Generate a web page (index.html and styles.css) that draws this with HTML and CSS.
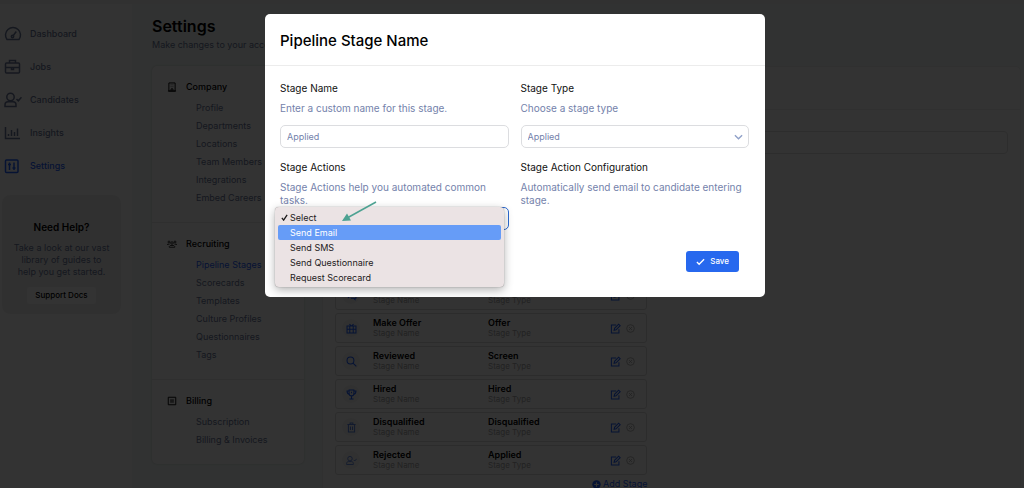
FILE: index.html
```html
<!DOCTYPE html>
<html lang="en">
<head>
  <meta charset="UTF-8" />
  <meta name="viewport" content="width=device-width, initial-scale=1.0"/>
  <title>Settings - Pipeline Stages</title>
  <link rel="stylesheet" href="styles.css">
</head>
<body>
  <svg class="sprite" aria-hidden="true">
    <symbol id="i-edit" viewBox="0 0 16 16">
      <path d="M9 3H2v11.5h11V9"/>
      <path d="M6 10.5l.6-2.8L12.6 1.7l2.2 2.2-6 6z"/>
    </symbol>
    <symbol id="i-remove" viewBox="0 0 16 16">
      <circle cx="8" cy="8" r="6.8"/>
      <path d="M5.5 5.5l5 5M10.5 5.5l-5 5"/>
    </symbol>
    <symbol id="i-user" viewBox="0 0 18 16">
      <circle cx="6.5" cy="5" r="3.7"/>
      <path d="M4 9.8h5c1.8 0 3 1.2 3 3v1.7H1v-1.7c0-1.8 1.2-3 3-3zM12.5 7l1.8 1.8L17.5 5.2"/>
    </symbol>
  </svg>

  <div class="app">
    <aside class="sidebar">
      <nav class="main-nav">
        <a href="#"><svg viewBox="0 0 18 16"><path d="M3 13.5a7.5 7.5 0 1 1 12 0z"/><circle cx="8.5" cy="10.5" r="1.2"/><path d="M9.3 9.5l3-4"/></svg>Dashboard</a>
        <a href="#"><svg viewBox="0 0 18 16"><rect x="1.5" y="4" width="14" height="10" rx="1"/><path d="M5.5 4V1.5h6V4M1.5 8.5h14M7.5 8.5v2h2v-2"/></svg>Jobs</a>
        <a href="#"><svg><use href="#i-user"/></svg>Candidates</a>
        <a href="#"><svg viewBox="0 0 18 16"><path d="M1.5 2v11.5H16M4.5 11V9M7.5 11V5M10.5 11V7M13.5 11V3.5"/></svg>Insights</a>
        <a href="#" class="active"><svg viewBox="0 0 18 16"><rect x="1.5" y="2" width="12.5" height="12.5" rx="1"/><path d="M5.5 4.5v7.5M10 4.5v7.5M4 6.5h3M8.5 10h3"/></svg>Settings</a>
      </nav>
      <div class="help">
        <h2>Need Help?</h2>
        <p>Take a look at our vast library of guides to help you get started.</p>
        <button type="button">Support Docs</button>
      </div>
    </aside>

    <main>
      <h1>Settings</h1>
      <p class="subtitle">Make changes to your account</p>

      <div class="columns">
        <nav class="settings-nav">
          <section>
            <h3><svg viewBox="0 0 16 16"><path d="M3 1.5h10v13H3zM1.5 14.5h13M6 4.5h1M9 4.5h1M6 7.5h1M9 7.5h1M6.5 14v-3h3v3"/></svg>Company</h3>
            <a href="#">Profile</a>
            <a href="#">Departments</a>
            <a href="#">Locations</a>
            <a href="#">Team Members</a>
            <a href="#">Integrations</a>
            <a href="#">Embed Careers</a>
          </section>
          <section>
            <h3><svg viewBox="0 0 20 16"><circle cx="4" cy="4" r="2"/><circle cx="16" cy="4" r="2"/><circle cx="10" cy="6" r="2.5"/><path d="M1 10V8.5h4M19 10V8.5h-4M4.5 14.5v-1.5l2-2h7l2 2v1.5z"/></svg>Recruiting</h3>
            <a href="#" class="active">Pipeline Stages</a>
            <a href="#">Scorecards</a>
            <a href="#">Templates</a>
            <a href="#">Culture Profiles</a>
            <a href="#">Questionnaires</a>
            <a href="#">Tags</a>
          </section>
          <section>
            <h3><svg viewBox="0 0 16 16"><path d="M2 2h12v12H2zM5 6.5h6M5 9.5h6"/></svg>Billing</h3>
            <a href="#">Subscription</a>
            <a href="#">Billing &amp; Invoices</a>
          </section>
        </nav>

        <div class="panel">
          <div class="panel-head"></div>
          <div class="panel-body">
            <input type="text" class="pipeline-name" aria-label="Pipeline name">
            <div class="stages-grid">
              <div>
                <ul class="stages">
                  <li>
                    <span class="badge"><svg viewBox="0 0 16 16"><path d="M1.5 2h9v7h-5l-2 2V9h-2zM12 6h2.5v6h-1.5v2l-2-2H7"/></svg></span>
                    <div><b>Interview</b><small>Stage Name</small></div>
                    <div><b>Interview</b><small>Stage Type</small></div>
                    <button type="button" class="edit" aria-label="Edit"><svg><use href="#i-edit"/></svg></button>
                    <button type="button" class="remove" aria-label="Remove"><svg><use href="#i-remove"/></svg></button>
                  </li>
                  <li>
                    <span class="badge"><svg viewBox="0 0 16 16"><path d="M1.5 4.5h13v10h-13zM1.5 9h13M5.5 4.5v10M10.5 4.5v10M8 4.500L5 1.500M8 4.500l3-3"/></svg></span>
                    <div><b>Make Offer</b><small>Stage Name</small></div>
                    <div><b>Offer</b><small>Stage Type</small></div>
                    <button type="button" class="edit" aria-label="Edit"><svg><use href="#i-edit"/></svg></button>
                    <button type="button" class="remove" aria-label="Remove"><svg><use href="#i-remove"/></svg></button>
                  </li>
                  <li>
                    <span class="badge"><svg viewBox="0 0 16 16"><circle cx="6.5" cy="6.5" r="5"/><path d="M10.2 10.2l4.800 4.800"/></svg></span>
                    <div><b>Reviewed</b><small>Stage Name</small></div>
                    <div><b>Screen</b><small>Stage Type</small></div>
                    <button type="button" class="edit" aria-label="Edit"><svg><use href="#i-edit"/></svg></button>
                    <button type="button" class="remove" aria-label="Remove"><svg><use href="#i-remove"/></svg></button>
                  </li>
                  <li>
                    <span class="badge"><svg viewBox="0 0 16 16"><path d="M4.5 1.5h7V6c0 2.5-1.5 4-3.5 4S4.5 8.5 4.5 6zM4.5 3h-3c0 3 1 4.5 3.5 5M11.5 3h3c0 3-1 4.5-3.5 5M8 10v4M5 14.5h6M8 4v2"/></svg></span>
                    <div><b>Hired</b><small>Stage Name</small></div>
                    <div><b>Hired</b><small>Stage Type</small></div>
                    <button type="button" class="edit" aria-label="Edit"><svg><use href="#i-edit"/></svg></button>
                    <button type="button" class="remove" aria-label="Remove"><svg><use href="#i-remove"/></svg></button>
                  </li>
                  <li>
                    <span class="badge light"><svg viewBox="0 0 16 16"><path d="M2 3.5h12M6 3.5v-2h4v2M3.5 3.5v11h9v-11M6.5 6.5v5M9.5 6.5v5"/></svg></span>
                    <div><b>Disqualified</b><small>Stage Name</small></div>
                    <div><b>Disqualified</b><small>Stage Type</small></div>
                    <button type="button" class="edit" aria-label="Edit"><svg><use href="#i-edit"/></svg></button>
                    <button type="button" class="remove" aria-label="Remove"><svg><use href="#i-remove"/></svg></button>
                  </li>
                  <li>
                    <span class="badge light"><svg><use href="#i-user"/></svg></span>
                    <div><b>Rejected</b><small>Stage Name</small></div>
                    <div><b>Applied</b><small>Stage Type</small></div>
                    <button type="button" class="edit" aria-label="Edit"><svg><use href="#i-edit"/></svg></button>
                    <button type="button" class="remove" aria-label="Remove"><svg><use href="#i-remove"/></svg></button>
                  </li>
                </ul>
                <a href="#" class="add-stage"><svg viewBox="0 0 16 16"><circle class="disc" cx="8" cy="8" r="7.5"/><path class="plus" d="M8 4v8M4 8h8"/></svg>Add Stage</a>
              </div>
            </div>
          </div>
        </div>
      </div>
    </main>
  </div>

  <div class="backdrop">
    <form class="modal" role="dialog" aria-labelledby="modal-title">
      <h2 id="modal-title">Pipeline Stage Name</h2>
      <div class="modal-body">
        <div class="fields">
          <div class="field">
            <label for="stage-name">Stage Name</label>
            <p>Enter a custom name for this stage.</p>
            <input type="text" id="stage-name" value="Applied">
          </div>
          <div class="field">
            <label for="stage-type">Stage Type</label>
            <p>Choose a stage type</p>
            <div class="select">
              <select id="stage-type"><option>Applied</option></select>
              <svg class="chevron" viewBox="0 0 10 6"><path d="M1 1l4 4 4-4"/></svg>
            </div>
          </div>
          <div class="field">
            <label for="stage-action">Stage Actions</label>
            <p>Stage Actions help you automated common tasks.</p>
            <div class="select open">
              <select id="stage-action"><option></option></select>
              <ul class="menu" role="listbox" aria-label="Stage Actions">
                <li role="option" aria-selected="true"><svg class="tick" viewBox="0 0 8 8"><path d="M1 4.5l2 2.5L7 1"/></svg>Select</li>
                <li role="option" class="hover">Send Email</li>
                <li role="option">Send SMS</li>
                <li role="option">Send Questionnaire</li>
                <li role="option">Request Scorecard</li>
              </ul>
              <svg class="arrow" viewBox="0 0 36 22"><path class="shaft" d="M35 1L7 16.5"/><path class="head" d="M1 20l5-7.500 4 7z"/></svg>
            </div>
          </div>
          <div class="field">
            <h4>Stage Action Configuration</h4>
            <p>Automatically send email to candidate entering stage.</p>
          </div>
        </div>
        <div class="actions">
          <button type="submit"><svg viewBox="0 0 10 8"><path d="M1 4l2.5 2.5L9 1"/></svg>Save</button>
        </div>
      </div>
    </form>
  </div>
</body>
</html>
```
FILE: styles.css
```css
* {
  box-sizing: border-box;
}

body {
  margin: 0;
  height: 100vh;
  overflow: hidden;
  font-family: Inter, "Open Sans", sans-serif;
  font-size: 9px;
  background-color: #f3faf8;
  color: #000;
}

h1, h2, h3, h4, p, ul {
  margin: 0;
  padding: 0;
}

ul {
  list-style: none;
}

a {
  color: #6b7799;
  text-decoration: none;
}

button, input, select {
  font: inherit;
}

svg {
  fill: none;
  stroke: currentColor;
  stroke-width: 1.5;
}

.sprite {
  position: absolute;
  width: 0;
  height: 0;
}

.active {
  color: #1f5fff;
}

/* page */
.app {
  display: flex;
  min-height: 100vh;
  border-top: 4px solid #f6f6f6;
}

.sidebar {
  flex: 0 0 132px;
  padding: 13px 11px 0 2px;
  background-color: #fff;
}

.main-nav a {
  display: flex;
  align-items: center;
  gap: 8px;
  height: 33px;
  padding-left: 2px;
  font-weight: 500;
}

.main-nav svg {
  width: 18px;
  height: 16px;
}

.help {
  margin-top: 13px;
  padding: 24px 10px 10px;
  border-radius: 8px;
  background-color: #f1f1f1;
  text-align: center;
}

.help h2 {
  font-size: 10px;
  line-height: 16px;
  font-weight: 600;
}

.help p {
  margin: 7px 0 9px;
  line-height: 12px;
  color: #6b7799;
}

.help button {
  padding: 0 8px;
  border: none;
  border-radius: 3px;
  background-color: #fff;
  font-size: 8px;
  line-height: 17px;
  font-weight: 500;
}

main {
  flex: 1;
  min-width: 0;
  padding: 11px 3px 0 20px;
}

h1 {
  font-size: 16px;
  line-height: 22px;
  font-weight: 600;
}

.subtitle {
  line-height: 16px;
  color: #6b7799;
}

.columns {
  display: flex;
  align-items: flex-start;
  gap: 18px;
  margin-top: 13px;
}

.settings-nav {
  flex: 0 0 152px;
  border-radius: 5px;
  background-color: #fff;
  box-shadow: 0 0 2px rgba(0,0,0,0.2);
}

.settings-nav section {
  padding: 13px 15px 15px;
}

.settings-nav section + section {
  border-top: 1px solid #ececec;
}

.settings-nav h3 {
  display: flex;
  align-items: center;
  gap: 9px;
  margin-bottom: 4px;
  font-size: 9px;
  line-height: 16px;
  font-weight: 500;
}

.settings-nav svg {
  width: 10px;
  height: 10px;
}

.settings-nav a {
  display: block;
  padding-left: 29px;
  line-height: 18px;
}

.panel {
  flex: 1;
  min-width: 0;
  border: 1px solid #eee;
  border-radius: 5px;
  background-color: #fff;
}

.panel-head {
  height: 43px;
  border-bottom: 1px solid #f0f0f0;
}

.panel-body {
  padding: 21px 12px 12px;
}

.pipeline-name {
  display: block;
  width: 100%;
  height: 23px;
  border: 1px solid #e2e2e2;
  border-radius: 4px;
}

.stages-grid {
  display: grid;
  grid-template-columns: 13fr 15fr;
  padding-top: 126px;
}

.stages li {
  display: grid;
  grid-template-columns: 31px 115px 1fr 11px 14px;
  align-items: center;
  height: 30px;
  margin-bottom: 3px;
  padding: 0 11px 0 6px;
  border: 1px solid #dcdcdc;
  border-radius: 3px;
}

.stages b, .stages small {
  display: block;
  line-height: 11px;
}

.stages b {
  font-weight: 600;
}

.stages small {
  font-size: 8px;
  color: #a8a8a8;
}

.badge {
  display: flex;
  align-items: center;
  justify-content: center;
  width: 18px;
  height: 18px;
  border-radius: 50%;
  background-color: #f4f4f4;
  color: #1f5fff;
}

.badge.light {
  color: #5b83e0;
}

.badge svg {
  width: 11px;
  height: 11px;
}

.edit, .remove {
  display: flex;
  justify-content: center;
  padding: 0;
  border: none;
  background: none;
  color: #1f5fff;
}

.remove {
  justify-content: flex-end;
  color: #aaa;
}

.edit svg {
  width: 11px;
  height: 11px;
}

.remove svg {
  width: 9px;
  height: 9px;
}

.add-stage {
  display: flex;
  justify-content: flex-end;
  align-items: center;
  gap: 2px;
  line-height: 12px;
  color: #1f5fff;
}

.add-stage svg {
  width: 9px;
  height: 9px;
}

.disc {
  fill: #1f5fff;
  stroke: none;
}

.plus {
  stroke: #fff;
  stroke-width: 2;
}

/* modal */
.backdrop {
  position: fixed;
  inset: 0;
  display: flex;
  justify-content: center;
  align-items: flex-start;
  padding: 14px 0 0 6px;
  background-color: rgba(0,0,0,0.8);
}

.modal {
  width: 100%;
  max-width: 500px;
  border-radius: 5px;
  background-color: #fff;
}

.modal h2 {
  padding: 16px 15px 13px;
  border-bottom: 1px solid #ececec;
  font-size: 15px;
  line-height: 22px;
  font-weight: 500;
}

.modal-body {
  padding: 16px 16px 25px 15px;
}

.fields {
  display: grid;
  grid-template-columns: 1fr 1fr;
  gap: 13px 12px;
}

.field label, .field h4 {
  display: block;
  margin-bottom: 8px;
  font-size: 10px;
  line-height: 12px;
  font-weight: 400;
  color: #111;
}

.field p {
  min-height: 23px;
  font-size: 10px;
  line-height: 13px;
  color: #7482ab;
}

.field input, .field select {
  display: block;
  width: 100%;
  height: 23px;
  padding: 0 6px;
  border: 1px solid #dcdde0;
  border-radius: 5px;
  outline: none;
  background-color: #fff;
  color: #7482ab;
  appearance: none;
}

.select {
  position: relative;
}

.chevron {
  position: absolute;
  top: 9px;
  right: 6px;
  width: 9px;
  height: 6px;
  color: #8fa0c8;
  pointer-events: none;
}

.select.open select {
  border-color: #2c6ad0;
}

.menu {
  position: absolute;
  top: 0;
  left: -5px;
  right: 5px;
  padding: 3px 3px 2px;
  border-radius: 4px;
  background-color: #ebe3e4;
  box-shadow: 0 0 1px rgba(0,0,0,0.5), 0 3px 10px rgba(0,0,0,0.3);
}

.menu li {
  position: relative;
  padding-left: 12px;
  border-radius: 2px;
  line-height: 15px;
  color: #1c1a1b;
}

.menu .hover {
  background-color: #669cf7;
  color: #fff;
}

.tick {
  position: absolute;
  left: 3px;
  top: 4px;
  width: 7px;
  height: 7px;
}

.arrow {
  position: absolute;
  top: -6px;
  left: 61px;
  width: 36px;
  height: 22px;
}

.shaft {
  stroke: #4da292;
}

.head {
  fill: #4da292;
  stroke: none;
}

.actions {
  display: flex;
  justify-content: flex-end;
  margin-top: 21px;
  padding-right: 10px;
}

.actions button {
  display: flex;
  align-items: center;
  gap: 5px;
  padding: 0 10px;
  border: none;
  border-radius: 3px;
  background-color: #2768ee;
  color: #fff;
  font-size: 8px;
  line-height: 21px;
  font-weight: 500;
}

.actions svg {
  width: 9px;
  height: 8px;
}
```
